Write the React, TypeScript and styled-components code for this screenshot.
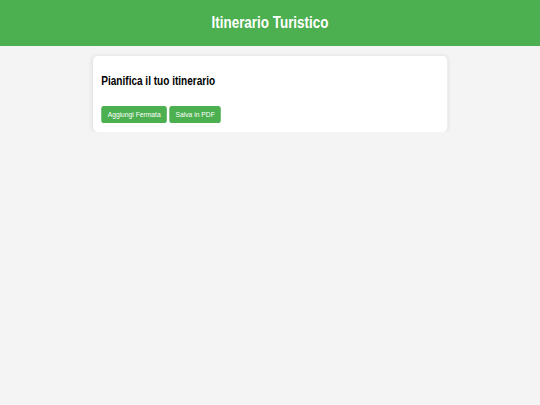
import React from 'react'
import styled, { createGlobalStyle } from 'styled-components'

// The reference was drawn at a wider viewport and squeezed horizontally,
// so the page is laid out on a wider stage and narrowed by the same ratio.
const SQUEEZE = 0.83

const GlobalStyle = createGlobalStyle`
  html, body {
    margin: 0;
    padding: 0;
    background: #f4f4f4;
    overflow: hidden;
    font-family: "Liberation Sans", Arial, Helvetica, sans-serif;
  }
`

const Stage = styled.div`
  width: ${540 / SQUEEZE}px;
  transform: scaleX(${SQUEEZE});
  transform-origin: 0 0;
`

const Header = styled.header`
  height: 45.5px;
  background: #4caf50;
  color: #fff;
  display: flex;
  align-items: center;
  justify-content: center;
`

const Title = styled.h1`
  margin: 0;
  font-size: 16.2px;
  font-weight: bold;
`

const Main = styled.main`
  width: 426.5px;
  margin: 10.5px auto 0;
`

const Card = styled.section`
  background: #fff;
  border-radius: 5px;
  box-shadow: 0 0 5px rgba(0, 0, 0, 0.1);
  padding: 10px 10px 9px;
`

const CardTitle = styled.h2`
  margin: 8px 0 18px;
  font-size: 12.1px;
  font-weight: bold;
  color: #000;
`

const Actions = styled.div`
  display: flex;
  gap: 2.5px;
`

const Button = styled.button`
  height: 17px;
  padding: 0 7.7px;
  border: none;
  border-radius: 2.5px;
  background: #4caf50;
  color: #fff;
  font-family: inherit;
  font-size: 8.1px;
  cursor: pointer;
`

export default function App() {
  return (
    <>
      <GlobalStyle />
      <Stage>
        <Header>
          <Title>Itinerario Turistico</Title>
        </Header>
        <Main>
          <Card>
            <CardTitle>Pianifica il tuo itinerario</CardTitle>
            <Actions>
              <Button>Aggiungi Fermata</Button>
              <Button>Salva in PDF</Button>
            </Actions>
          </Card>
        </Main>
      </Stage>
    </>
  )
}
